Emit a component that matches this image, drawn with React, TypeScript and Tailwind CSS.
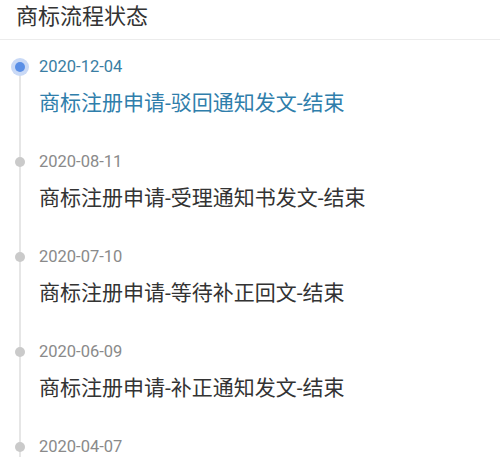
const items = [
  { date: '2020-12-04', text: '商标注册申请-驳回通知发文-结束', active: true },
  { date: '2020-08-11', text: '商标注册申请-受理通知书发文-结束', active: false },
  { date: '2020-07-10', text: '商标注册申请-等待补正回文-结束', active: false },
  { date: '2020-06-09', text: '商标注册申请-补正通知发文-结束', active: false },
  { date: '2020-04-07', text: '', active: false },
];

export default function App() {
  return (
    <div
      className="w-[500px] h-[457px] overflow-hidden bg-white"
      style={{ fontFamily: 'Roboto, "Noto Sans CJK SC", sans-serif' }}
    >
      <div className="h-[40px] border-b border-[#ececec] px-4 flex items-center">
        <h1 className="text-[22px] leading-none text-[#333] -mt-[6px]">商标流程状态</h1>
      </div>

      <ul className="pt-[15px]">
        {items.map((item, i) => (
          <li key={item.date} className="flex">
            <div className="relative w-[39px] shrink-0">
              <div
                className={
                  i === 0
                    ? 'absolute left-[19px] top-[12px] bottom-0 w-[1.5px] bg-[#e6e6e6]'
                    : 'absolute left-[19px] top-0 bottom-0 w-[1.5px] bg-[#e6e6e6]'
                }
              />
              {item.active ? (
                <div className="absolute left-[11px] top-[3px] w-[18px] h-[18px] rounded-full bg-[#c9d9f6] flex items-center justify-center">
                  <div className="w-[10px] h-[10px] rounded-full bg-[#5a8fe6]" />
                </div>
              ) : (
                <div className="absolute left-[15px] top-[7px] w-[10px] h-[10px] rounded-full bg-[#cacaca]" />
              )}
            </div>
            <div className="pb-[32px]">
              <div
                className={
                  item.active
                    ? 'h-6 flex items-center text-[16.5px] text-[#3a7ea3]'
                    : 'h-6 flex items-center text-[16.5px] text-[#8a8a8a]'
                }
              >
                {item.date}
              </div>
              {item.text && (
                <div
                  className={
                    item.active
                      ? 'mt-[11px] h-7 flex items-center text-[21px] text-[#2f7eab]'
                      : 'mt-[11px] h-7 flex items-center text-[21px] text-[#333]'
                  }
                >
                  {item.text}
                </div>
              )}
            </div>
          </li>
        ))}
      </ul>
    </div>
  );
}
